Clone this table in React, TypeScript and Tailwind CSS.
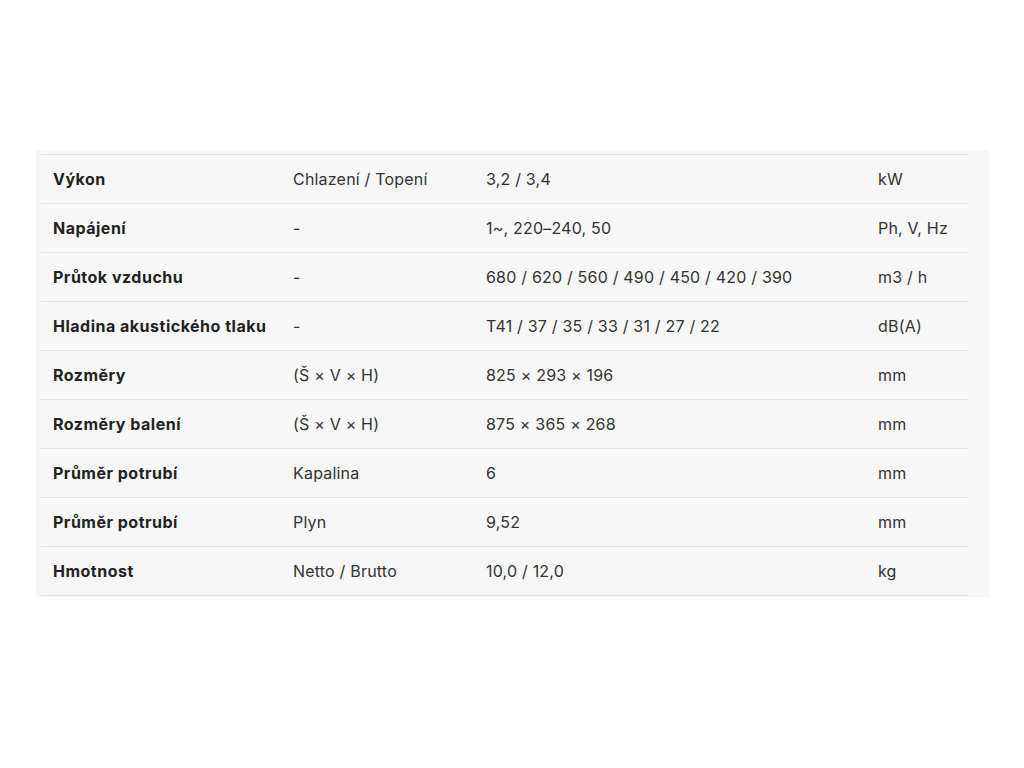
const rows: [string, string, string, string][] = [
  ["Výkon", "Chlazení / Topení", "3,2 / 3,4", "kW"],
  ["Napájení", "-", "1~, 220–240, 50", "Ph, V, Hz"],
  ["Průtok vzduchu", "-", "680 / 620 / 560 / 490 / 450 / 420 / 390", "m3 / h"],
  ["Hladina akustického tlaku", "-", "T41 / 37 / 35 / 33 / 31 / 27 / 22", "dB(A)"],
  ["Rozměry", "(Š × V × H)", "825 × 293 × 196", "mm"],
  ["Rozměry balení", "(Š × V × H)", "875 × 365 × 268", "mm"],
  ["Průměr potrubí", "Kapalina", "6", "mm"],
  ["Průměr potrubí", "Plyn", "9,52", "mm"],
  ["Hmotnost", "Netto / Brutto", "10,0 / 12,0", "kg"],
];

export default function App() {
  return (
    <div className="w-[1024px] h-[768px] bg-white pt-[150px] pl-[36px] font-['Inter',sans-serif]">
      <div className="w-[953px] bg-[#f7f7f7] pt-[4px] pb-[1px] pl-[5px]">
        <table className="w-[928px] border-collapse border-t border-[#e2e2e2] text-[16px]">
          <tbody>
            {rows.map((r, i) => (
              <tr key={i} className="h-[49px] border-b border-[#e2e2e2]">
                <td className="w-[240px] px-3 font-bold tracking-[0.5px] text-[#222] whitespace-nowrap">{r[0]}</td>
                <td className="w-[193px] px-3 tracking-[0.2px] text-[#333]">{r[1]}</td>
                <td className="w-[392px] px-3 tracking-[0.2px] text-[#333]">{r[2]}</td>
                <td className="px-3 tracking-[0.2px] text-[#333]">{r[3]}</td>
              </tr>
            ))}
          </tbody>
        </table>
      </div>
    </div>
  );
}
